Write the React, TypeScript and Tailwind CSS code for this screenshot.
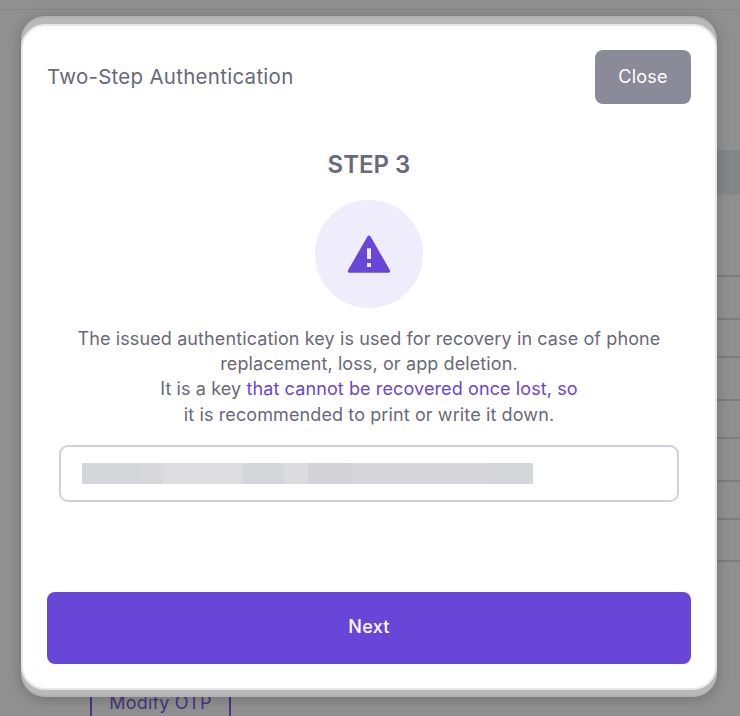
const rowHeights = [
  'h-[82px]',
  'h-[43px]',
  'h-[38px]',
  'h-[43px]',
  'h-[38px]',
  'h-[43px]',
  'h-[38px]',
  'h-[42px]',
];

const maskBlocks = [
  'w-[60px] bg-[#d6d7db]',
  'w-[21px] bg-[#d8d8db]',
  'w-[80px] bg-[#dddddf]',
  'w-[41px] bg-[#d5d6da]',
  'w-[24px] bg-[#dcdcde]',
  'w-[43px] bg-[#d3d2d7]',
  'w-[141px] bg-[#d7d6db]',
  'w-[41px] bg-[#d5d6da]',
];

function WarningIcon() {
  return (
    <svg width="44" height="40" viewBox="0 0 44 40" aria-hidden="true">
      <path
        fill="#6846d8"
        fillRule="evenodd"
        d="M20.3 2.7Q22 .4 23.7 2.7L42.8 36Q43.9 38.8 41.4 38.8H2.6Q.1 38.8 1.2 36ZM20 14.2V25H24V14.2ZM20 29V33H24V29Z"
      />
    </svg>
  );
}

function Backdrop() {
  return (
    <div className="flex h-full flex-col bg-[#909090]">
      <div className="h-[10px] shrink-0 border-b border-[#868686]" />
      <div className="mt-[140px] ml-[60px] h-[45px] shrink-0 bg-[#848688]" />
      {rowHeights.map((height, i) => (
        <div key={i} className={`${height} ml-[60px] shrink-0 border-b-2 border-[#7d7d80]`} />
      ))}
      <div className="mt-[112px] ml-[90px] flex h-[57px] w-[141px] shrink-0 items-center justify-center border-2 border-[#493582] text-[18px] tracking-[0.17px] text-[#493582]">
        Modify OTP
      </div>
    </div>
  );
}

export default function App() {
  return (
    <div className="relative h-[716px] w-[740px] overflow-hidden font-['Inter','Liberation_Sans',sans-serif] text-[#696977]">
      <Backdrop />
      <div className="absolute top-[16px] left-[21px] h-[681px] w-[696px] rounded-[24px] border-y-2 border-[#b1b1b1] bg-[#b9b9b9] pt-[6px] shadow-[0_2px_14px_rgba(0,0,0,0.22)]">
        <section className="flex h-[666px] flex-col rounded-[24px] border-2 border-[#e7e7e7] bg-white px-[24px] pt-[24px]">
          <header className="flex h-[54px] shrink-0 items-center justify-between">
            <h1 className="text-[20.5px] tracking-[0.27px]">Two-Step Authentication</h1>
            <button className="h-[54px] w-[96px] rounded-[8px] bg-[#8a8a98] pb-px text-[18px] tracking-[0.2px] text-white">
              Close
            </button>
          </header>
          <div className="mt-[43px] flex flex-col items-center">
            <h2 className="h-[36px] text-[24px] leading-[36px] font-semibold">STEP 3</h2>
            <div className="mt-[17px] flex size-[108px] items-center justify-center rounded-full bg-[#efecfb]">
              <WarningIcon />
            </div>
            <p className="mt-[18px] text-center text-[18px] leading-[25.2px] tracking-[0.11px]">
              The issued authentication key is used for recovery in case of phone
              <br />
              replacement, loss, or app deletion.
              <br />
              It is a key <span className="text-[#6846d8]">that cannot be recovered once lost, so</span>
              <br />
              it is recommended to print or write it down.
            </p>
            <div className="mt-[18px] flex h-[57px] w-[620px] items-center rounded-[9px] border-2 border-[#d1d0da] pl-[21px]">
              {maskBlocks.map((block, i) => (
                <div key={i} className={`${block} h-[21px]`} />
              ))}
            </div>
          </div>
          <button className="mt-auto mb-[24px] h-[72px] shrink-0 rounded-[8px] bg-[#6846d8] pb-[3px] text-[18px] font-medium tracking-[0.3px] text-white">
            Next
          </button>
        </section>
      </div>
    </div>
  );
}
